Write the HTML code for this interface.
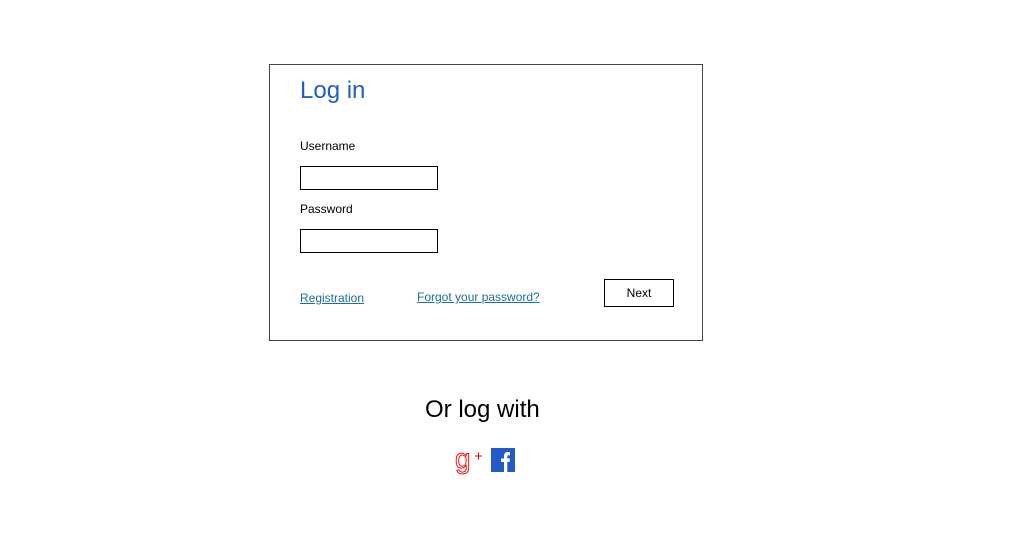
<!DOCTYPE html>
<html><head><meta charset="utf-8"><style>
*{margin:0;padding:0;box-sizing:border-box}
body{width:1020px;height:552px;background:#fff;font-family:"Liberation Sans",sans-serif;position:relative;overflow:hidden}
.box{position:absolute;left:269px;top:64px;width:434px;height:277px;border:1px solid #444}
.a{position:absolute}
h1{position:absolute;left:300px;top:77px;font-size:24px;font-weight:normal;color:#1f5fc6}
.lbl{font-size:12px;color:#000}
.in{border:1px solid #000;width:138px;height:24px}
.lnk{font-size:12px;color:#1a6fa0;text-decoration:underline}
.btn{left:604px;top:279px;width:70px;height:28px;border:1px solid #000;font-size:12px;text-align:center;line-height:26px}
</style></head><body>
<div class="box"></div>
<h1>Log in</h1>
<div class="a lbl" style="left:300px;top:139px">Username</div>
<div class="a in" style="left:300px;top:166px"></div>
<div class="a lbl" style="left:300px;top:202px">Password</div>
<div class="a in" style="left:300px;top:229px"></div>
<div class="a lnk" style="left:300px;top:291px">Registration</div>
<div class="a lnk" style="left:417px;top:290px">Forgot your password?</div>
<div class="a btn">Next</div>
<div class="a" style="left:425px;top:396px;font-size:24px;color:#000">Or log with</div>
<svg class="a" style="left:454px;top:444px" width="30" height="32" viewBox="0 0 30 32">
<text x="1" y="24" font-family="Liberation Sans, sans-serif" font-size="28" fill="none" stroke="#e00" stroke-width="0.9">g</text>
<path d="M21 12H28M24.5 8.5V15.5" stroke="#e00" stroke-width="1" fill="none"/>
</svg>
<svg class="a" style="left:491px;top:448px" width="24" height="24" viewBox="0 0 24 24">
<rect width="24" height="24" fill="#2459c9"/>
<path d="M13 24V14H10V10.5H13V8C13 5.2 14.6 4 17 4C18 4 19 4.1 19 4.1V7.3H17.6C16.4 7.3 16.3 7.9 16.3 8.6V10.5H19L18.6 14H16.3V24Z" fill="#fff"/>
</svg>
</body></html>
